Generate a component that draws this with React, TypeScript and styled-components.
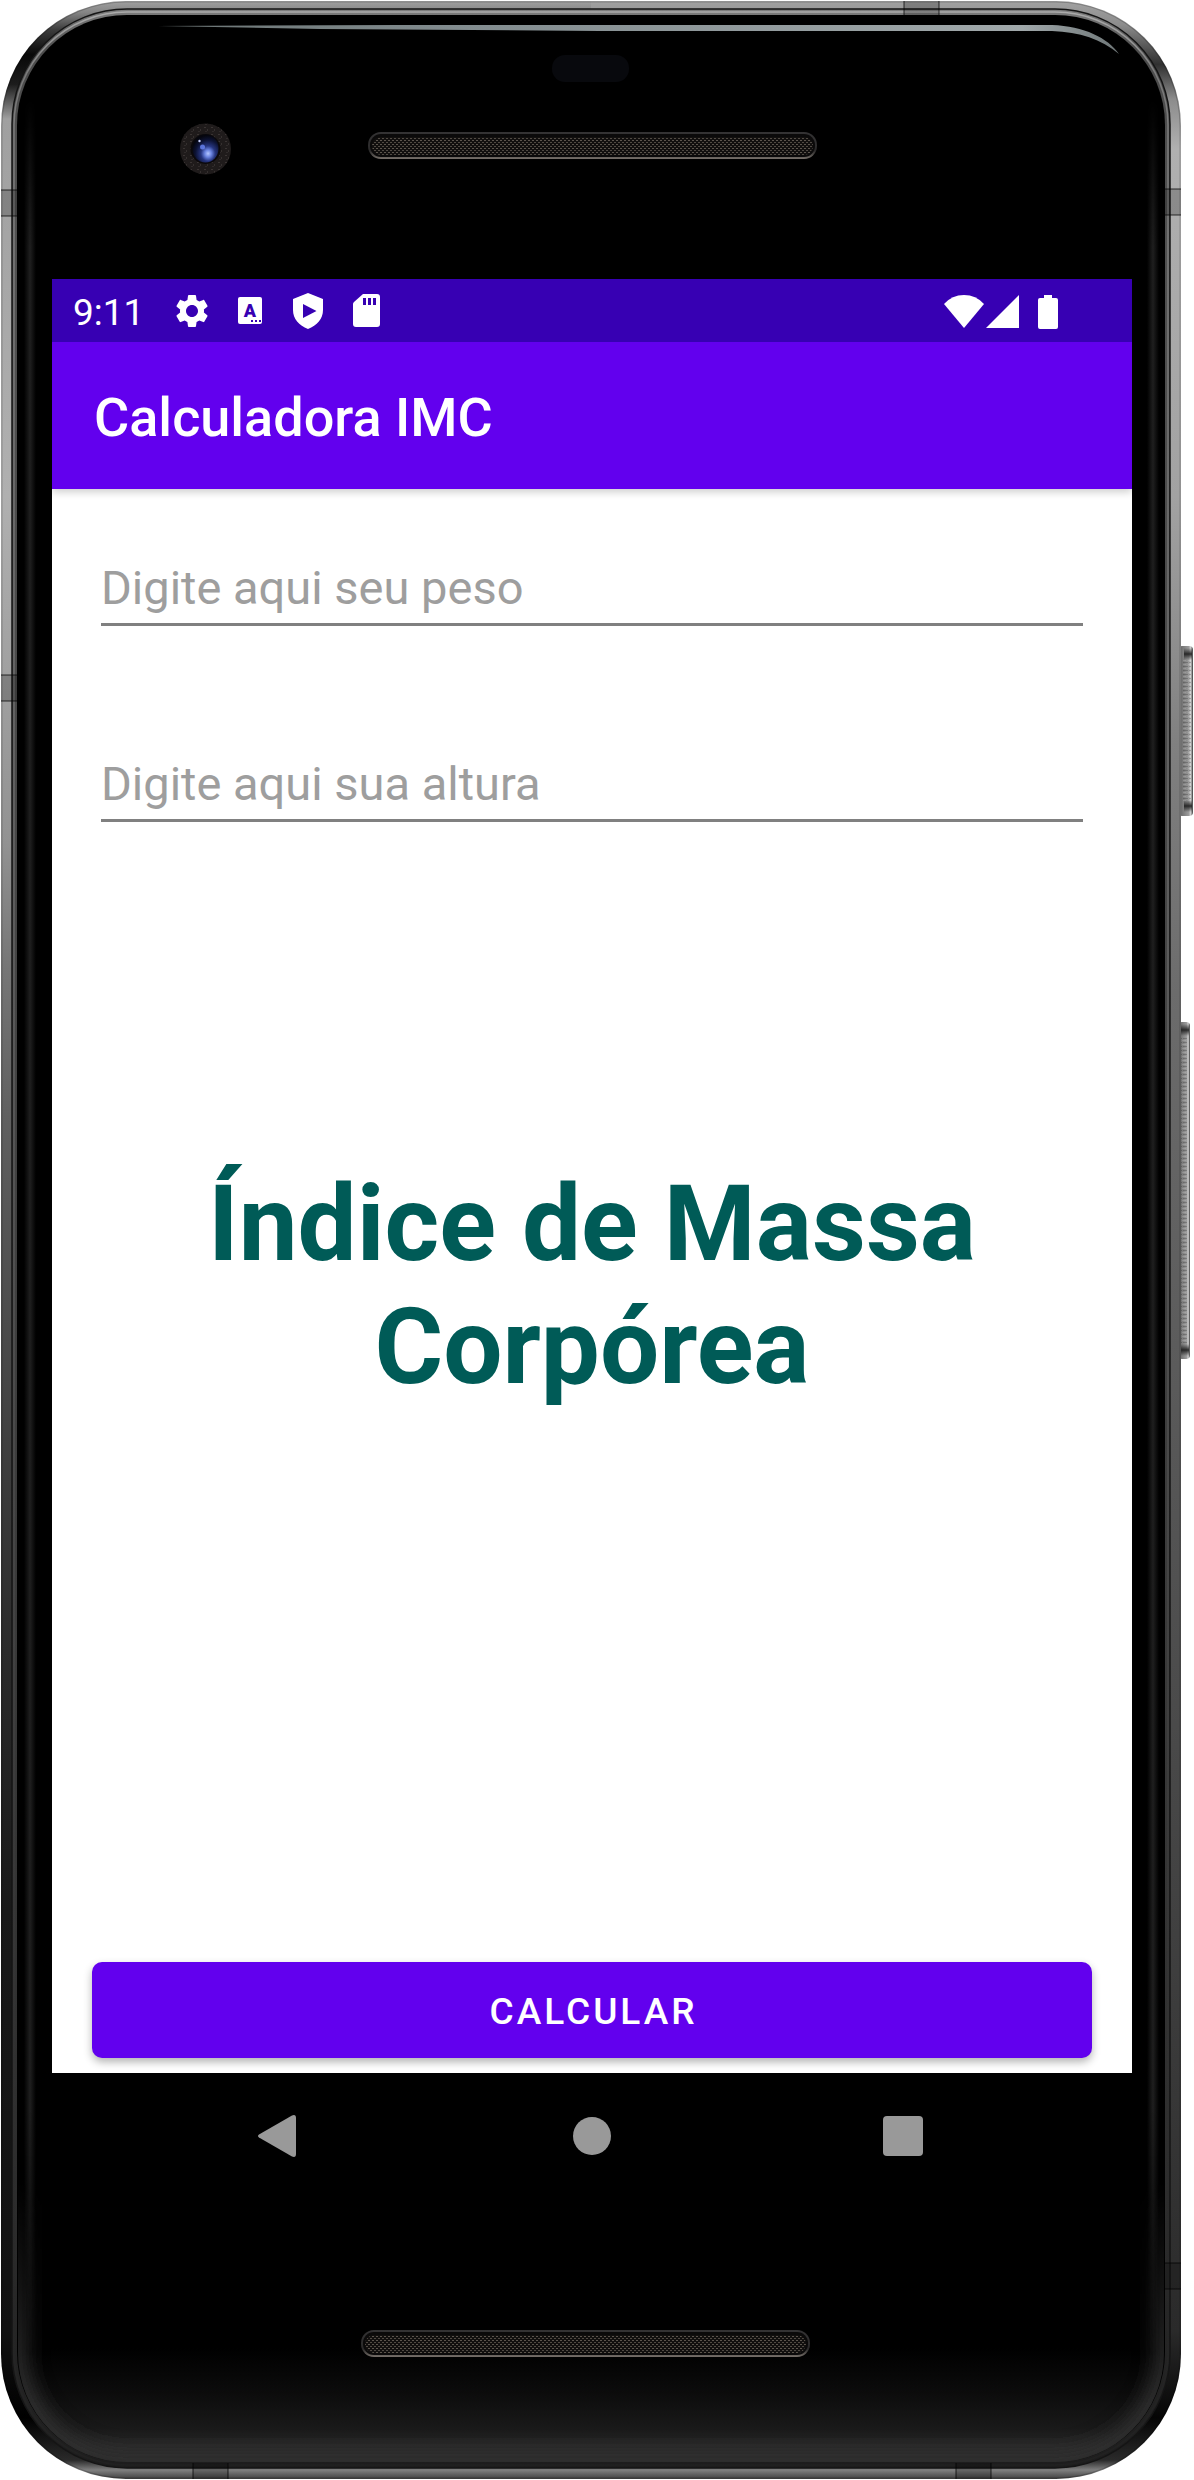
import React, { useState } from "react";
import styled, { createGlobalStyle } from "styled-components";

const color = {
  primary: "#6200ee",
  primaryDark: "#3700b3",
  heading: "#005b57",
  hint: "#9e9e9e",
  line: "#808080",
  nav: "#999999",
};

const GlobalStyle = createGlobalStyle`
  *, *::before, *::after { box-sizing: border-box; }
  body {
    margin: 0;
    background: #ffffff;
    font-family: Roboto, "Noto Sans", sans-serif;
  }
`;

const Device = styled.div`
  position: relative;
  width: 100%;
  padding: 279px 62px 281px 52px;
`;

const Shell = styled.svg`
  position: absolute;
  inset: 0;
  width: 100%;
  height: 100%;
`;

const Screen = styled.div`
  position: relative;
  display: flex;
  flex-direction: column;
  background: #ffffff;
`;

const StatusBar = styled.div`
  display: flex;
  align-items: center;
  justify-content: space-between;
  height: 63px;
  padding: 0 74px 0 21px;
  background: ${color.primaryDark};
  color: #ffffff;
`;

const StatusGroup = styled.div<{ $gap: number }>`
  display: flex;
  align-items: center;
  gap: ${(p) => p.$gap}px;
`;

const Clock = styled.time`
  margin-right: 10px;
  padding-top: 4px;
  font-size: 37px;
  line-height: 44px;
`;

const Glyph = styled.svg<{ $w: number; $h: number }>`
  display: block;
  flex: none;
  width: ${(p) => p.$w}px;
  height: ${(p) => p.$h}px;
  fill: currentColor;
`;

const AppBar = styled.header`
  position: relative;
  display: flex;
  align-items: center;
  height: 147px;
  padding: 4px 42px 0;
  background: ${color.primary};
  box-shadow: 0 3px 8px rgba(0, 0, 0, 0.2);
  clip-path: inset(0 0 -16px 0);
`;

const Title = styled.h1`
  margin: 0;
  color: #ffffff;
  font-size: 54px;
  line-height: 62px;
  font-weight: 500;
`;

const Form = styled.form`
  display: flex;
  flex-direction: column;
  min-height: 1584px;
  padding: 71px 40px 15px;
`;

const Fields = styled.div`
  display: flex;
  flex-direction: column;
  gap: 130px;
  padding: 0 9px;
`;

const TextField = styled.input`
  display: block;
  width: 100%;
  height: 66px;
  padding: 0 0 8px;
  border: 0;
  border-bottom: 3px solid ${color.line};
  border-radius: 0;
  outline: none;
  background: transparent;
  color: #212121;
  font-family: inherit;
  font-size: 47px;
  line-height: 55px;

  &::placeholder {
    color: ${color.hint};
    opacity: 1;
  }
  &:focus {
    border-bottom-color: ${color.primary};
  }
`;

const Result = styled.h2`
  margin: 341px 0 0;
  color: ${color.heading};
  font-size: 105px;
  line-height: 123px;
  font-weight: 700;
  text-align: center;
`;

const Submit = styled.button`
  height: 96px;
  margin-top: auto;
  padding: 3px 0 0 3px;
  border: 0;
  border-radius: 10px;
  background: ${color.primary};
  box-shadow: 0 4px 8px rgba(0, 0, 0, 0.3);
  color: #ffffff;
  font-family: inherit;
  font-size: 37px;
  line-height: 44px;
  font-weight: 500;
  letter-spacing: 3px;
  text-transform: uppercase;
  cursor: pointer;
`;

const NavBar = styled.nav`
  display: grid;
  grid-template-columns: repeat(3, 1fr);
  justify-items: center;
  align-items: center;
  height: 126px;
  padding: 0 74px;
  background: #000000;
`;

const NavButton = styled.button`
  padding: 0;
  border: 0;
  background: none;
  color: ${color.nav};
  cursor: pointer;
`;

function Speaker({ x, y }: { x: number; y: number }) {
  return (
    <g>
      <rect x={x} y={y} width="449" height="27" rx="13" fill="url(#speakerEdge)" />
      <rect x={x + 2} y={y + 2} width="445" height="23" rx="11" fill="#0b0a0a" />
      <rect x={x + 4} y={y + 5} width="441" height="18" rx="9" fill="url(#mesh)" />
    </g>
  );
}

function Band({ x, y, vertical = false }: { x: number; y: number; vertical?: boolean }) {
  const w = vertical ? 16 : 35;
  const h = vertical ? 26 : 16;
  return (
    <g>
      <rect x={x} y={y} width={w} height={h} fill="#000000" fillOpacity="0.2" />
      <path
        d={vertical ? `M${x} ${y}h${w}M${x} ${y + h}h${w}` : `M${x} ${y}v${h}M${x + w} ${y}v${h}`}
        stroke="#000000"
        strokeOpacity="0.5"
        strokeWidth="1.5"
      />
    </g>
  );
}

function PhoneShell() {
  return (
    <Shell viewBox="0 0 1194 2480" preserveAspectRatio="none" aria-hidden="true">
      <defs>
        <linearGradient id="rimLeft" gradientUnits="userSpaceOnUse" x1="0" y1="0" x2="0" y2="2480">
          <stop offset="0" stopColor="#a2a2a2" />
          <stop offset="0.005" stopColor="#858585" />
          <stop offset="0.012" stopColor="#3c3c3c" />
          <stop offset="0.022" stopColor="#080808" />
          <stop offset="0.034" stopColor="#1c1c1c" />
          <stop offset="0.048" stopColor="#a0a0a0" />
          <stop offset="0.2" stopColor="#b0b0b0" />
          <stop offset="0.34" stopColor="#929292" />
          <stop offset="0.39" stopColor="#767676" />
          <stop offset="0.45" stopColor="#606060" />
          <stop offset="0.56" stopColor="#454545" />
          <stop offset="0.66" stopColor="#2c2c2c" />
          <stop offset="0.77" stopColor="#191919" />
          <stop offset="0.94" stopColor="#111111" />
          <stop offset="0.975" stopColor="#000000" />
          <stop offset="0.992" stopColor="#2a2a2a" />
          <stop offset="0.996" stopColor="#808080" />
          <stop offset="1" stopColor="#383838" />
        </linearGradient>
        <linearGradient id="rimRight" gradientUnits="userSpaceOnUse" x1="0" y1="0" x2="0" y2="2480">
          <stop offset="0" stopColor="#a2a2a2" />
          <stop offset="0.01" stopColor="#8c8c8c" />
          <stop offset="0.018" stopColor="#5c5c5c" />
          <stop offset="0.026" stopColor="#303030" />
          <stop offset="0.04" stopColor="#8c8c8c" />
          <stop offset="0.06" stopColor="#b0b0b0" />
          <stop offset="0.2" stopColor="#a2a2a2" />
          <stop offset="0.3" stopColor="#808080" />
          <stop offset="0.4" stopColor="#6c6c6c" />
          <stop offset="0.56" stopColor="#5a5a5a" />
          <stop offset="0.78" stopColor="#404040" />
          <stop offset="0.94" stopColor="#2a2a2a" />
          <stop offset="0.975" stopColor="#050505" />
          <stop offset="0.992" stopColor="#2a2a2a" />
          <stop offset="0.996" stopColor="#808080" />
          <stop offset="1" stopColor="#383838" />
        </linearGradient>
        <linearGradient id="innerRim" gradientUnits="userSpaceOnUse" x1="0" y1="0" x2="0" y2="2480">
          <stop offset="0" stopColor="#8a8a8a" />
          <stop offset="0.02" stopColor="#4c4c4c" />
          <stop offset="0.1" stopColor="#505050" />
          <stop offset="0.4" stopColor="#444444" />
          <stop offset="0.7" stopColor="#383838" />
          <stop offset="0.9" stopColor="#2c2c2c" />
          <stop offset="1" stopColor="#1c1c1c" />
        </linearGradient>
        <linearGradient id="fineLine" gradientUnits="userSpaceOnUse" x1="0" y1="0" x2="0" y2="2480">
          <stop offset="0" stopColor="#b4b4b4" />
          <stop offset="0.03" stopColor="#7a7a7a" />
          <stop offset="0.1" stopColor="#7a7a7a" />
          <stop offset="0.45" stopColor="#5c5c5c" />
          <stop offset="0.75" stopColor="#3a3a3a" />
          <stop offset="1" stopColor="#202020" />
        </linearGradient>
        <linearGradient id="glassGlow" x1="0" y1="0" x2="0" y2="1">
          <stop offset="0" stopColor="#000000" />
          <stop offset="0.4" stopColor="#0c0c0c" />
          <stop offset="0.7" stopColor="#191919" />
          <stop offset="0.88" stopColor="#2a2a2a" />
          <stop offset="1" stopColor="#2d2d2d" />
        </linearGradient>
        <linearGradient id="strip" x1="0" y1="0" x2="1" y2="0">
          <stop offset="0" stopColor="#1f1f1f" stopOpacity="0" />
          <stop offset="0.5" stopColor="#1f1f1f" />
          <stop offset="1" stopColor="#1f1f1f" stopOpacity="0" />
        </linearGradient>
        <linearGradient id="stripFade" gradientUnits="userSpaceOnUse" x1="0" y1="0" x2="0" y2="2480">
          <stop offset="0.04" stopColor="#000000" />
          <stop offset="0.1" stopColor="#ffffff" />
          <stop offset="0.85" stopColor="#ffffff" />
          <stop offset="0.95" stopColor="#000000" />
        </linearGradient>
        <linearGradient id="cornerFade" gradientUnits="userSpaceOnUse" x1="0" y1="0" x2="0" y2="2480">
          <stop offset="0.88" stopColor="#000000" />
          <stop offset="0.97" stopColor="#ffffff" />
        </linearGradient>
        <linearGradient id="shine" gradientUnits="userSpaceOnUse" x1="160" y1="0" x2="1118" y2="0">
          <stop offset="0" stopColor="#6b7474" />
          <stop offset="0.3" stopColor="#818b8e" />
          <stop offset="0.9" stopColor="#a0a8aa" />
          <stop offset="1" stopColor="#6f7778" />
        </linearGradient>
        <linearGradient id="speakerEdge" x1="0" y1="0" x2="0" y2="1">
          <stop offset="0" stopColor="#343334" />
          <stop offset="0.7" stopColor="#2b2a2a" />
          <stop offset="1" stopColor="#77706a" />
        </linearGradient>
        <linearGradient id="sideButton" x1="0" y1="0" x2="1" y2="0">
          <stop offset="0" stopColor="#5a5a5a" />
          <stop offset="0.4" stopColor="#808080" />
          <stop offset="0.72" stopColor="#9c9c9c" />
          <stop offset="0.85" stopColor="#d4d4d4" />
          <stop offset="1" stopColor="#333333" />
        </linearGradient>
        <linearGradient id="buttonEnd" x1="0" y1="0" x2="0" y2="1">
          <stop offset="0" stopColor="#1c1c1c" stopOpacity="0" />
          <stop offset="0.5" stopColor="#1c1c1c" stopOpacity="0.9" />
          <stop offset="1" stopColor="#1c1c1c" stopOpacity="0" />
        </linearGradient>
        <radialGradient id="lens" cx="0.6" cy="0.68" r="0.65">
          <stop offset="0" stopColor="#b4c6ff" />
          <stop offset="0.2" stopColor="#6a83e0" />
          <stop offset="0.42" stopColor="#26357f" />
          <stop offset="0.75" stopColor="#0c1233" />
          <stop offset="1" stopColor="#05060e" />
        </radialGradient>
        <pattern id="mesh" width="4" height="4" patternUnits="userSpaceOnUse">
          <rect width="4" height="4" fill="#12100f" />
          <rect x="0" y="0" width="2" height="1" fill="#5c554d" />
          <rect x="2" y="2" width="2" height="1" fill="#504a43" />
        </pattern>
        <pattern id="speckle" width="7" height="7" patternUnits="userSpaceOnUse">
          <rect width="7" height="7" fill="#1f1b1b" />
          <rect x="1" y="1" width="2" height="1" fill="#3a3433" />
          <rect x="4" y="3" width="1" height="2" fill="#35302f" />
          <rect x="2" y="5" width="2" height="1" fill="#2f2a2a" />
        </pattern>
        <pattern id="knurl" width="6" height="4" patternUnits="userSpaceOnUse">
          <rect width="4" height="1" fill="#ffffff" fillOpacity="0.14" />
          <rect x="1" y="2" width="5" height="1" fill="#000000" fillOpacity="0.2" />
        </pattern>
        <clipPath id="leftHalf"><rect width="591" height="2480" /></clipPath>
        <clipPath id="rightHalf"><rect x="591" width="603" height="2480" /></clipPath>
        <clipPath id="glass"><rect x="18" y="16" width="1146" height="2446" rx="109" /></clipPath>
        <mask id="stripMask" maskUnits="userSpaceOnUse" x="0" y="0" width="1194" height="2480">
          <rect width="1194" height="2480" fill="url(#stripFade)" />
        </mask>
        <mask id="cornerMask" maskUnits="userSpaceOnUse" x="0" y="0" width="1194" height="2480">
          <rect width="1194" height="2480" fill="url(#cornerFade)" />
        </mask>
        <filter id="soft" filterUnits="userSpaceOnUse" x="-60" y="-60" width="1314" height="2600">
          <feGaussianBlur stdDeviation="9" />
        </filter>
      </defs>

      <rect x="1178" y="646" width="15" height="170" rx="4" fill="url(#sideButton)" />
      <rect x="1183" y="660" width="8" height="142" fill="url(#knurl)" />
      <rect x="1184" y="648" width="8" height="12" fill="url(#buttonEnd)" />
      <rect x="1184" y="800" width="8" height="12" fill="url(#buttonEnd)" />
      <rect x="1178" y="1022" width="12" height="337" rx="4" fill="url(#sideButton)" />
      <rect x="1181" y="1038" width="6" height="306" fill="url(#knurl)" />
      <rect x="1181" y="1024" width="8" height="12" fill="url(#buttonEnd)" />
      <rect x="1181" y="1344" width="8" height="12" fill="url(#buttonEnd)" />

      <rect x="1" y="1" width="1180" height="2478" rx="125" fill="url(#rimLeft)" clipPath="url(#leftHalf)" />
      <rect x="1" y="1" width="1180" height="2478" rx="125" fill="url(#rimRight)" clipPath="url(#rightHalf)" />
      <rect x="2" y="2" width="1178" height="2476" rx="124" fill="none" stroke="#000000" strokeOpacity="0.2" />
      <rect x="12" y="9" width="1158" height="2459" rx="115" fill="url(#innerRim)" stroke="#151515" strokeWidth="1.5" />
      <rect x="14" y="12" width="1154" height="2453" rx="113" fill="none" stroke="url(#fineLine)" strokeWidth="1.5" />
      <rect x="17" y="15" width="1148" height="2447" rx="110" fill="#000000" />

      <g clipPath="url(#glass)">
        <rect x="18" y="2348" width="1146" height="114" fill="url(#glassGlow)" />
        <g mask="url(#cornerMask)">
          <rect x="12" y="10" width="1158" height="2458" rx="115" fill="none" stroke="#2d2d2d" strokeWidth="34" filter="url(#soft)" />
        </g>
        <g mask="url(#stripMask)">
          <rect x="24" y="90" width="12" height="2290" fill="url(#strip)" />
          <rect x="1147" y="90" width="12" height="2290" fill="url(#strip)" />
        </g>
      </g>

      <path
        d="M158 26L400 25H1052C1084 26 1108 38 1119 54C1101 39 1080 32 1052 31H600L320 29Z"
        fill="url(#shine)"
      />
      <rect x="552" y="55" width="77" height="27" rx="13" fill="#08090d" />
      <circle cx="205.5" cy="149" r="25.5" fill="url(#speckle)" />
      <circle cx="205.5" cy="149" r="15" fill="#0b090b" />
      <ellipse cx="205.5" cy="148.5" rx="13" ry="14" fill="url(#lens)" />
      <circle cx="202.5" cy="147" r="2.5" fill="#6f8cff" fillOpacity="0.75" />
      <circle cx="199.5" cy="141" r="1.2" fill="#c8d2ff" />
      <Speaker x={368} y={132} />
      <Speaker x={361} y={2330} />

      <Band x={1} y={190} vertical />
      <Band x={1} y={675} vertical />
      <Band x={1165} y={189} vertical />
      <Band x={1165} y={2263} vertical />
      <Band x={904} y={1} />
      <Band x={193} y={2463} />
      <Band x={956} y={2463} />
    </Shell>
  );
}

function StatusIcons() {
  return (
    <>
      <Glyph $w={40} $h={40} viewBox="0 0 24 24" aria-hidden="true">
        <path d="M19.14 12.94c.04-.3.06-.61.06-.94 0-.32-.02-.64-.07-.94l2.03-1.58c.18-.14.23-.41.12-.61l-1.92-3.32c-.12-.22-.37-.29-.59-.22l-2.39.96c-.5-.38-1.03-.7-1.62-.94l-.36-2.54c-.04-.24-.24-.41-.48-.41h-3.84c-.24 0-.43.17-.47.41l-.36 2.54c-.59.24-1.13.57-1.62.94l-2.39-.96c-.22-.08-.47 0-.59.22L2.74 8.87c-.12.21-.08.47.12.61l2.03 1.58c-.05.3-.09.63-.09.94s.02.64.07.94l-2.03 1.58c-.18.14-.23.41-.12.61l1.92 3.32c.12.22.37.29.59.22l2.39-.96c.5.38 1.03.7 1.62.94l.36 2.54c.05.24.24.41.48.41h3.84c.24 0 .44-.17.47-.41l.36-2.54c.59-.24 1.13-.56 1.62-.94l2.39.96c.22.08.47 0 .59-.22l1.92-3.32c.12-.22.07-.47-.12-.61l-2.01-1.58zM12 15.6c-1.98 0-3.6-1.62-3.6-3.6s1.62-3.6 3.6-3.6 3.6 1.62 3.6 3.6-1.62 3.6-3.6 3.6z" />
      </Glyph>
      <Glyph $w={40} $h={40} viewBox="0 0 40 40" aria-hidden="true">
        <rect x="8" y="6" width="24" height="27" rx="2" />
        <text x="20" y="26" textAnchor="middle" fontSize="18" fontWeight="900" fill={color.primaryDark}>
          A
        </text>
        <path d="M21 29h2v2h-2zM25 29h2v2h-2zM29 29h2v2h-2z" fill={color.primaryDark} />
      </Glyph>
      <Glyph $w={40} $h={40} viewBox="0 0 40 40" aria-hidden="true">
        <path d="M20 2L35 8V19C35 28 29 34.500 20 38C11 34.500 5 28 5 19V8ZM15 13V27L28.500 20Z" fillRule="evenodd" />
      </Glyph>
      <Glyph $w={40} $h={40} viewBox="0 0 40 40" aria-hidden="true">
        <path
          d="M17 3H31Q34 3 34 6V33Q34 36 31 36H10Q7 36 7 33V13Q7 12 8 11ZM17 7V14H20V7ZM22 7V14H25V7ZM27 7V14H30V7Z"
          fillRule="evenodd"
        />
      </Glyph>
    </>
  );
}

export default function App() {
  const [weight, setWeight] = useState("");
  const [height, setHeight] = useState("");
  const [result, setResult] = useState("Índice de Massa Corpórea");

  const calculate = (event: React.FormEvent) => {
    event.preventDefault();
    const kg = parseFloat(weight.replace(",", "."));
    const m = parseFloat(height.replace(",", "."));
    if (kg > 0 && m > 0) {
      setResult((kg / (m * m)).toFixed(2).replace(".", ","));
    }
  };

  return (
    <>
      <GlobalStyle />
      <Device>
        <PhoneShell />
        <Screen>
          <StatusBar>
            <StatusGroup $gap={18}>
              <Clock>9:11</Clock>
              <StatusIcons />
            </StatusGroup>
            <StatusGroup $gap={2}>
              <Glyph $w={40} $h={36} viewBox="0 0 40 36" aria-hidden="true">
                <path d="M0 11Q8 2 20 2Q32 2 40 11L20 35Z" />
              </Glyph>
              <Glyph $w={50} $h={36} viewBox="0 0 50 36" aria-hidden="true">
                <path d="M33 2V35H0Z" />
              </Glyph>
              <Glyph $w={20} $h={36} viewBox="0 0 20 36" aria-hidden="true">
                <path d="M6 2H14V5H18Q20 5 20 7V34Q20 36 18 36H2Q0 36 0 34V7Q0 5 2 5H6Z" />
              </Glyph>
            </StatusGroup>
          </StatusBar>
          <AppBar>
            <Title>Calculadora IMC</Title>
          </AppBar>
          <Form onSubmit={calculate}>
            <Fields>
              <TextField
                id="peso"
                inputMode="decimal"
                aria-label="Digite aqui seu peso"
                placeholder="Digite aqui seu peso"
                value={weight}
                onChange={(e) => setWeight(e.target.value)}
              />
              <TextField
                id="altura"
                inputMode="decimal"
                aria-label="Digite aqui sua altura"
                placeholder="Digite aqui sua altura"
                value={height}
                onChange={(e) => setHeight(e.target.value)}
              />
            </Fields>
            <Result>{result}</Result>
            <Submit type="submit">Calcular</Submit>
          </Form>
          <NavBar aria-label="Sistema">
            <NavButton type="button" aria-label="Voltar">
              <Glyph $w={48} $h={48} viewBox="0 0 48 48">
                <path d="M2 22.500L35 3.500Q39 2 39 6V42Q39 46 35 44.500L2 25.500Q0 24 2 22.500Z" />
              </Glyph>
            </NavButton>
            <NavButton type="button" aria-label="Início">
              <Glyph $w={48} $h={48} viewBox="0 0 48 48">
                <circle cx="24" cy="24" r="19" />
              </Glyph>
            </NavButton>
            <NavButton type="button" aria-label="Recentes">
              <Glyph $w={48} $h={48} viewBox="0 0 48 48">
                <rect x="4" y="4" width="40" height="40" rx="4" />
              </Glyph>
            </NavButton>
          </NavBar>
        </Screen>
      </Device>
    </>
  );
}
